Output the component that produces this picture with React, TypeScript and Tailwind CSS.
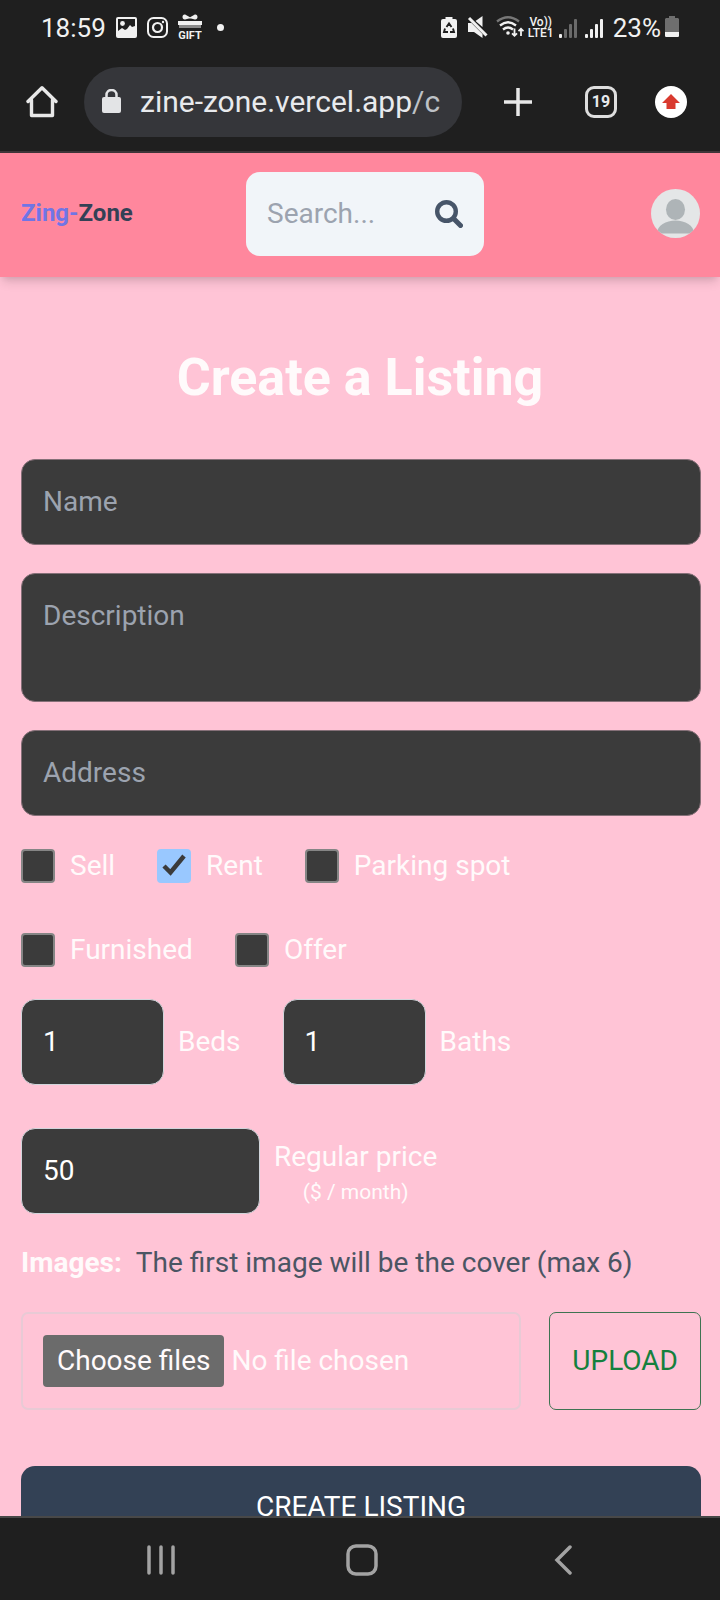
import React, { useState } from "react";

const inputBase =
  "rounded-[14px] bg-[#3b3b3b] px-[21px] py-[21px] leading-[42px] text-white placeholder:text-[#9ca3af] outline-none";

function SignalBars({ lit }: { lit: number }) {
  const bars = [
    { x: 1, h: 4 },
    { x: 6, h: 9 },
    { x: 11, h: 14 },
    { x: 16, h: 19 },
  ];
  return (
    <>
      {bars.map((b, i) => (
        <rect key={b.x} x={b.x} y={24 - b.h} width="3" height={b.h} rx="1" fill={i < lit ? "#f1f1f1" : "#6a6a6a"} />
      ))}
    </>
  );
}

function StatusBar() {
  return (
    <div className="flex h-[55px] items-center justify-between pr-[41px] pl-[41px] text-[26px] leading-[30px] text-[#f1f1f1]">
      <div className="flex items-center gap-[10px]">
        <time>18:59</time>
        <svg width="21" height="21" viewBox="0 0 21 21" aria-hidden="true">
          <path fill="#f1f1f1" fillRule="evenodd" d="M2 0h17a2 2 0 0 1 2 2v17a2 2 0 0 1-2 2H2a2 2 0 0 1-2-2V2a2 2 0 0 1 2-2ZM2 2v12l4-3 3 2 2-1 3-4 2 2 3-1V2H2Z" />
          <circle cx="6.500" cy="6.500" r="2.400" fill="#f1f1f1" />
        </svg>
        <svg width="21" height="21" viewBox="0 0 21 21" fill="none" stroke="#f1f1f1" strokeWidth="2" aria-hidden="true">
          <rect x="1" y="1" width="19" height="19" rx="5.500" />
          <circle cx="10.500" cy="10.500" r="4.500" strokeWidth="2.200" />
          <circle cx="16" cy="5" r="1.200" fill="#f1f1f1" stroke="none" />
        </svg>
        <svg width="24" height="28" viewBox="0 0 24 28" fill="#f1f1f1" aria-hidden="true">
          <path d="M12 3.200 8 1C6 0 4.500 1 4.500 3S6 6 8 5.200L11 4.500h2l3 .7c2 .8 3.500-.2 3.500-2.200S18 0 16 1Z" />
          <rect x="0" y="7" width="24" height="4" />
          <rect x="1" y="11" width="22" height="3" fill="#8a8a8a" />
          <text x="12" y="24.500" textAnchor="middle" fontSize="11" fontWeight="700" fontFamily="Roboto, sans-serif">GIFT</text>
        </svg>
        <span className="ml-[5px] size-[7px] rounded-full bg-[#f1f1f1]" />
      </div>
      <div className="flex items-center gap-1">
        <svg width="20" height="28" viewBox="0 0 20 28" aria-hidden="true">
          <path fill="#f1f1f1" d="M5.500 3h7v2H15a2 2 0 0 1 2 2v15a2 2 0 0 1-2 2H3a2 2 0 0 1-2-2V7a2 2 0 0 1 2-2h2.500Z" />
          <path d="m6.500 13 2.500-3.500 2.500 3.500M13 14.500l1 3.500h-4M5 14.500 4 18h4" fill="none" stroke="#1f1f1f" strokeWidth="1.900" />
        </svg>
        <svg width="26" height="28" viewBox="0 0 26 28" fill="#f1f1f1" aria-hidden="true">
          <path d="M11.500 7 18.500 2v11Z" />
          <path d="M4.500 4 23 22" stroke="#1f1f1f" strokeWidth="5" />
          <path d="M4 9h3.500L18.500 20v4L10 18H4Z" />
          <path d="M5 4 22.500 21.500" stroke="#f1f1f1" strokeWidth="3" />
        </svg>
        <svg width="30" height="28" viewBox="0 0 30 28" fill="none" strokeWidth="2.300" aria-hidden="true">
          <path d="M3 7.500Q14-1 25 7.500" stroke="#777" />
          <path d="M6 11.500Q14 5 22 11.500" stroke="#f1f1f1" />
          <path d="M9 15.500Q14 11.500 19 15.500" stroke="#f1f1f1" />
          <circle cx="14" cy="19" r="1.800" fill="#f1f1f1" />
          <path d="M20.500 14.500v7m-2.500-2.200 2.500 2.500 2.500-2.500M27 22v-7m-2.500 2.200L27 14.700l2.500 2.500" stroke="#f1f1f1" strokeWidth="1.800" />
        </svg>
        <span className="flex w-[26px] flex-col items-center text-[12px] leading-[11px] font-medium">
          <span>Vo))</span>
          <span>LTE1</span>
        </span>
        <svg width="22" height="28" viewBox="0 0 22 28" aria-hidden="true"><SignalBars lit={1} /></svg>
        <svg width="25" height="28" viewBox="0 0 25 28" aria-hidden="true"><SignalBars lit={4} /></svg>
        <span>23%</span>
        <svg width="14" height="28" viewBox="0 0 14 28" aria-hidden="true">
          <path fill="#6e6e6e" d="M4 2h6v2h3l1 1v18H0V5l1-1h3Z" />
          <path fill="#f1f1f1" d="M0 18h14v4l-1 1H1l-1-1Z" />
        </svg>
      </div>
    </div>
  );
}

function BrowserBar() {
  return (
    <div className="flex h-[98px] items-center border-b-2 border-[#3f3539] pr-[33px] pb-[2px] pl-[26px] text-[#e8eaed]">
      <button type="button" aria-label="Home" className="shrink-0">
        <svg width="32" height="34" viewBox="0 0 32 34" fill="none" stroke="#e8e8e8" strokeWidth="3.400" strokeLinejoin="round" strokeLinecap="round">
          <path d="M2 16.500 16 2.700 30 16.500M5.500 15v15.500h21V15" />
        </svg>
      </button>
      <div className="ml-[26px] flex h-[70px] min-w-0 flex-1 items-center gap-[18px] rounded-full bg-[#35363a] pr-[12px] pl-[18px]">
        <svg width="20" height="26" viewBox="0 0 20 26" className="shrink-0" aria-hidden="true">
          <rect x="0" y="8" width="19" height="16" rx="2" fill="#e3e4e6" />
          <path d="M4.500 9V6a5 5 0 0 1 10 0v3" fill="none" stroke="#e3e4e6" strokeWidth="2.500" />
        </svg>
        <span className="overflow-hidden text-[30px] leading-[40px] whitespace-nowrap">
          zine-zone.vercel.app<span className="text-[#bdc1c6]">/c</span>
        </span>
      </div>
      <button type="button" aria-label="New tab" className="ml-[42px] shrink-0">
        <svg width="28" height="28" viewBox="0 0 28 28" stroke="#e8e8e8" strokeWidth="3.500"><path d="M14 0v28M0 14h28" /></svg>
      </button>
      <button type="button" aria-label="Open tabs" className="ml-[53px] flex size-8 shrink-0 items-center justify-center rounded-[9px] border-3 border-[#dedede] text-[16px] leading-[18px] font-bold">
        19
      </button>
      <button type="button" aria-label="Update browser" className="ml-[38px] flex size-8 shrink-0 items-center justify-center rounded-full bg-white">
        <svg width="18" height="16" viewBox="0 0 18 16" fill="#d93a2f"><path d="M9 0 18 9h-4.500v6h-9V9H0Z" /></svg>
      </button>
    </div>
  );
}

function SiteHeader() {
  return (
    <header className="relative flex h-[124px] items-center bg-[#ff879d] pt-[18px] pr-[20px] pb-[21px] pl-[21px] shadow-[0_7px_10px_-2px_rgba(0,0,0,0.12),0_4px_7px_-4px_rgba(0,0,0,0.12)]">
      <a href="/" className="w-[225px] shrink-0 text-[24px] leading-[35px] font-bold">
        <span className="text-[#7075e6]">Zing-</span>
        <span className="text-[#334155]">Zone</span>
      </a>
      <form className="flex h-[84px] w-[238px] items-center rounded-[14px] bg-[#f1f5f9] px-[21px]" onSubmit={(e) => e.preventDefault()}>
        <input aria-label="Search" placeholder="Search..." className="w-[168px] min-w-0 bg-transparent leading-[42px] outline-none placeholder:text-[#9ca3af]" />
        <button type="submit" aria-label="Submit search" className="shrink-0">
          <svg width="28" height="28" viewBox="0 0 28 28" fill="none" stroke="#475569">
            <circle cx="11.500" cy="11.500" r="9.300" strokeWidth="4.400" />
            <path d="m18.500 18.500 7 7" strokeWidth="5" strokeLinecap="round" />
          </svg>
        </button>
      </form>
      <a href="/profile" aria-label="Profile" className="ml-auto shrink-0">
        <svg width="49" height="49" viewBox="0 0 49 49">
          <defs><clipPath id="avatar"><circle cx="24.500" cy="24.500" r="24.500" /></clipPath></defs>
          <g clipPath="url(#avatar)">
            <rect width="49" height="49" fill="#e4e6e7" />
            <ellipse cx="24.500" cy="20.500" rx="9.500" ry="10.500" fill="#aeb4b7" />
            <path d="M6 44.500c0-8 9-13 18.500-13S43 36.500 43 44.500Z" fill="#aeb4b7" />
          </g>
        </svg>
      </a>
    </header>
  );
}

function CheckField({ id, label, initial = false }: { id: string; label: string; initial?: boolean }) {
  const [on, setOn] = useState(initial);
  return (
    <label htmlFor={id} className="flex items-center gap-[14px]">
      <span className="grid w-[35px] grid-cols-[34px] place-items-center">
        <input
          id={id}
          type="checkbox"
          checked={on}
          onChange={() => setOn(!on)}
          className="col-start-1 row-start-1 size-[34px] appearance-none rounded-[4px] border-2 border-[#858585] bg-[#3b3b3b] checked:border-[#99c8ff] checked:bg-[#99c8ff]"
        />
        {on && (
          <svg className="pointer-events-none col-start-1 row-start-1" width="24" height="24" viewBox="0 0 24 24" fill="none" stroke="#3b3b3b" strokeWidth="4.500" aria-hidden="true">
            <path d="m2 12 6.500 6.500L22 2" />
          </svg>
        )}
      </span>
      {label}
    </label>
  );
}

function ListingForm() {
  return (
    <form className="flex flex-col pr-[19px] pb-[49px] pl-[21px]" onSubmit={(e) => e.preventDefault()}>
      <div className="flex flex-col gap-[28px]">
        <input aria-label="Name" placeholder="Name" className={`${inputBase} w-full border border-[#857078]`} />
        <textarea aria-label="Description" placeholder="Description" className={`${inputBase} h-[129px] w-full resize-none border border-[#857078]`} />
        <input aria-label="Address" placeholder="Address" className={`${inputBase} w-full border border-[#857078]`} />
        <div className="flex flex-wrap gap-[42px] pt-px leading-[42px]">
          <CheckField id="sell" label="Sell" />
          <CheckField id="rent" label="Rent" initial />
          <CheckField id="parking" label="Parking spot" />
          <CheckField id="furnished" label="Furnished" />
          <CheckField id="offer" label="Offer" />
        </div>
        <div className="flex flex-wrap gap-x-[42px] gap-y-[43px]">
          <div className="flex items-center gap-[14px]">
            <input id="beds" inputMode="numeric" defaultValue="1" className={`${inputBase} w-[143px] border border-[#d1d5db]`} />
            <label htmlFor="beds">Beds</label>
          </div>
          <div className="flex items-center gap-[14px]">
            <input id="baths" inputMode="numeric" defaultValue="1" className={`${inputBase} w-[143px] border border-[#d1d5db]`} />
            <label htmlFor="baths">Baths</label>
          </div>
          <div className="flex w-full items-center gap-[14px]">
            <input id="price" inputMode="numeric" defaultValue="50" className={`${inputBase} w-[239px] border border-[#d1d5db]`} />
            <label htmlFor="price" className="flex flex-col items-center leading-[42px]">
              Regular price
              <span className="text-[21px] leading-[28px]">($ / month)</span>
            </label>
          </div>
        </div>
        <p className="leading-[42px] font-bold">
          Images:
          <span className="ml-[14px] font-normal text-[#4b5563]">The first image will be the cover (max 6)</span>
        </p>
        <div className="flex gap-[28px]">
          <label className="flex min-w-0 flex-1 items-center gap-[7px] rounded-[7px] border-2 border-[#e8cad5] px-[20px] py-[21px]">
            <input type="file" multiple className="sr-only" />
            <span className="rounded-[4px] bg-[#6b6b6b] px-[14px] py-[5px] leading-[42px]">Choose files</span>
            <span>No file chosen</span>
          </label>
          <button type="button" className="rounded-[7px] border border-[#3f7352] px-[22px] text-[#15803d]">UPLOAD</button>
        </div>
      </div>
      <button type="submit" className="mt-[56px] rounded-[14px] bg-[#334155] px-[21px] py-[20px] leading-[42px] text-white">CREATE LISTING</button>
    </form>
  );
}

function SystemNav() {
  return (
    <nav className="grid h-[84px] shrink-0 grid-cols-3 place-items-center border-t-2 border-[#484848] bg-[#1f1f1f] pt-[2px] pr-[57px] pl-[60px]">
      <button type="button" aria-label="Recent apps">
        <svg width="28" height="30" viewBox="0 0 28 30" stroke="#a3a3a3" strokeWidth="3.500" strokeLinecap="round"><path d="M2 2v26M14 2v26M26 2v26" /></svg>
      </button>
      <button type="button" aria-label="Home screen">
        <svg width="32" height="32" viewBox="0 0 32 32" fill="none" stroke="#a3a3a3" strokeWidth="3.500"><rect x="2" y="2" width="28" height="28" rx="8" /></svg>
      </button>
      <button type="button" aria-label="Back">
        <svg width="18" height="30" viewBox="0 0 18 30" fill="none" stroke="#a3a3a3" strokeWidth="3.500" strokeLinecap="round"><path d="M16 2 3 15l13 13" /></svg>
      </button>
    </nav>
  );
}

export default function App() {
  return (
    <div className="flex h-screen flex-col bg-[#ffc4d6] font-[Roboto,sans-serif] text-[28px] leading-[42px] text-[#fffafb]">
      <div className="shrink-0 bg-[#1f1f1f]">
        <StatusBar />
        <BrowserBar />
      </div>
      <div className="min-h-0 flex-1 overflow-y-auto [scrollbar-width:none]">
        <SiteHeader />
        <main>
          <h1 className="pt-[69px] pb-[50px] text-center text-[52px] leading-[63px] font-bold">Create a Listing</h1>
          <ListingForm />
        </main>
      </div>
      <SystemNav />
    </div>
  );
}
